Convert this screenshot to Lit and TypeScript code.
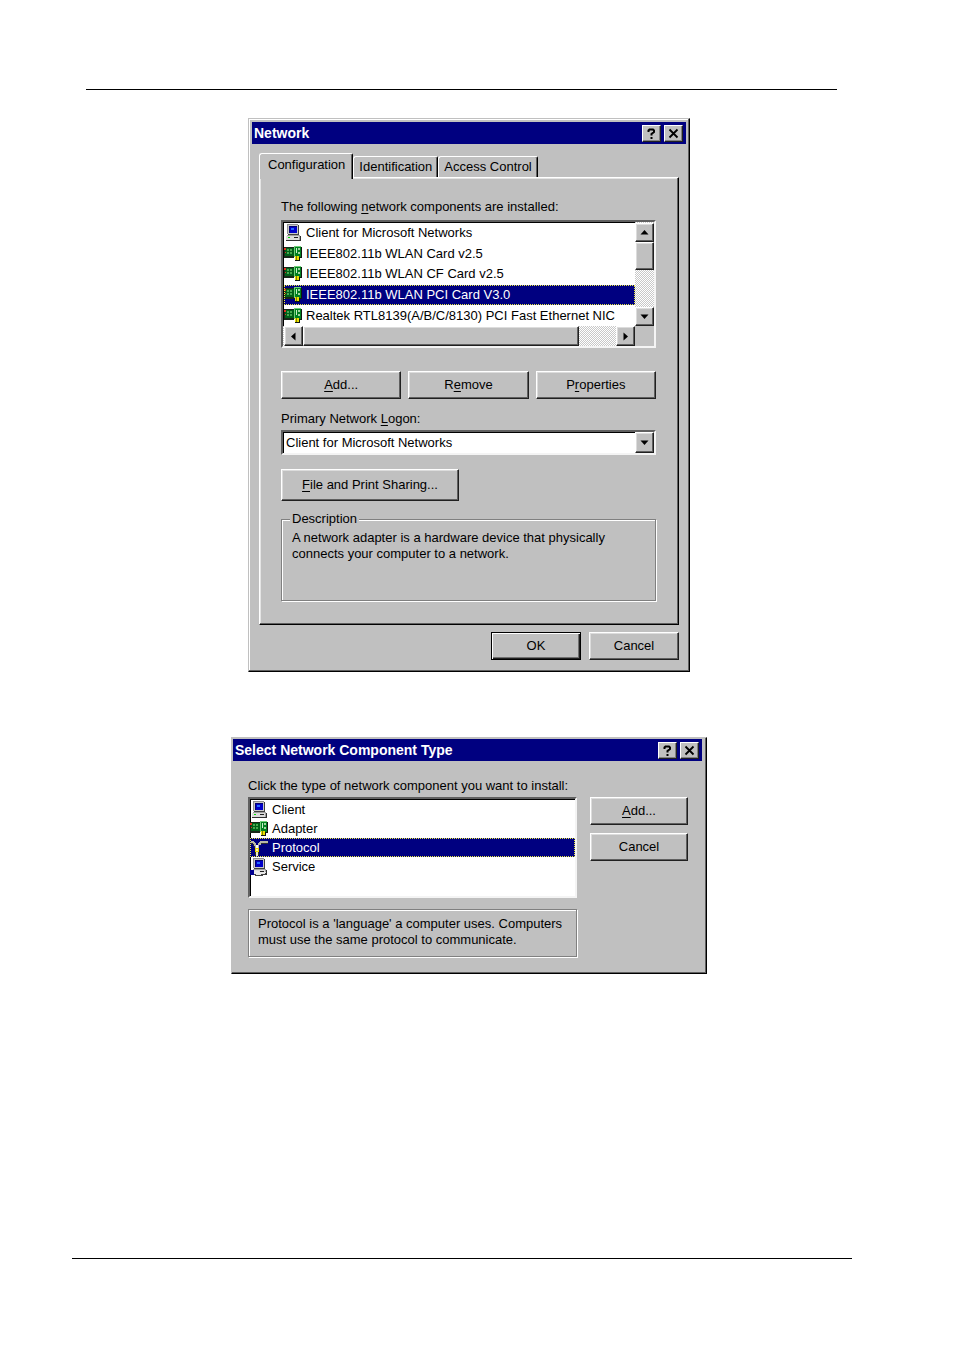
import { LitElement, html, css, svg, nothing } from "lit";
import { customElement, property, state } from "lit/decorators.js";

const computer = (hand: boolean) => svg`
  <path d="M3 0h11v1H4v9H3z" fill="#909090"/>
  <path d="M4 1h10v10H4z" fill="#c8c8c8"/>
  <path d="M14 1h1v10H4v-1h10z" fill="#404040"/>
  <path d="M5 2h8v7H5z" fill="#0000c8"/>
  <path d="M5 2h8v1H6v6H5z" fill="#000070"/>
  <path d="M7 4h3v2H7z" fill="#2468ff"/>
  <path d="M3 11h12l2 1v4H2v-4z" fill="#a0a0a0"/>
  <path d="M2 12h13v4H2z" fill="#dcdcdc"/>
  <path d="M16 12h1v5H2v-1h14z" fill="#303030"/>
  <path d="M4 13h2v1H4z" fill="#00e000"/>
  <path d="M10 13h4v1h-4z" fill="#202020"/>
  ${hand
    ? svg`<path d="M0 12h4v5H0z" fill="#000090"/>
      <path d="M4 13h4l2 1h6v2h-4l-1 1H6l-2-1z" fill="#e8e8e8"/>
      <path d="M4 16h2v1h5v-1h4v-1h1v2h-3v1H5v-1H4z" fill="#404040"/>`
    : nothing}`;

const card = svg`
  <path d="M0 2h10v11H0z" fill="#182818"/>
  <path d="M1 3h9v8H1z" fill="#006018"/>
  <path d="M0 3h2v2H0zM1 7h1v1H1z" fill="#e03020"/>
  <path d="M3 4h2v2H3zM6 4h2v2H6zM3 7h2v2H3zM6 7h2v2H6z" fill="#48a850"/>
  <path d="M10 1h7v11h-2v2h-4v-2h-1z" fill="#008020"/>
  <path d="M10 1h7v1h-6v10h-1z" fill="#70d078"/>
  <path d="M17 2h1v11h-2v3h-5v-1h4v-3h2z" fill="#101810"/>
  <path d="M12 3h1v5h-1z" fill="#c8f0c8"/>
  <path d="M14 3h2v2h-2zM14 7h2v2h-2z" fill="#a0d8a0"/>
  <path d="M11 11h4v4h-4z" fill="#e8e000"/>
  <path d="M12 11h1v4h-1z" fill="#808000"/>`;

const protocol = svg`
  <path d="M1 2h3v1h1v1h1v2h2V4h1V3h1V2h8v3h-7v1H9v3H5V7H4V5H3V4H1z" fill="#b8b8a8"/>
  <path d="M1 4h2v1h1v2h1v2H4V7H3V5H1zM11 4h7v1h-7z" fill="#303030"/>
  <path d="M6 6h2v3H6z" fill="#fff"/>
  <path d="M5 9h4v4H5z" fill="#e8d800"/>
  <path d="M6 10h2v2H6z" fill="#fff8b0"/>
  <path d="M5 13h4v3H5z" fill="#404010"/>
  <path d="M6 13h2v4H6z" fill="#e8e8d0"/>`;

const pictures: Record<string, unknown> = {
  client: computer(false),
  service: computer(true),
  adapter: card,
  protocol,
};

const base = css`
  * { box-sizing: border-box; }
  button, select, fieldset, legend, ul, li, p, h2 {
    margin: 0;
    padding: 0;
    font: inherit;
    color: inherit;
  }
  ul { list-style: none; }
  u { text-underline-offset: 2px; text-decoration-thickness: 1px; }
  .push {
    height: 28px;
    background: #c0c0c0;
    border: 1px solid;
    border-color: #fff #202020 #202020 #fff;
    box-shadow: inset -1px -1px #606060, inset 1px 1px #dcdcdc;
    border-radius: 0;
    text-align: center;
  }
  .sunken {
    background: #fff;
    border: 2px solid;
    border-color: #606060 #f4f4f4 #f4f4f4 #606060;
    box-shadow: inset 1px 1px #000;
  }
  .row { display: flex; align-items: center; gap: 4px; }
  .row svg { flex: none; width: 18px; height: 18px; }
  .row span { white-space: nowrap; }
  .selected {
    background: #000080;
    color: #fff;
    outline: 1px dotted #e8e840;
    outline-offset: -1px;
  }
`;

const picture = (name: string) => html`
  <svg viewBox="0 0 18 18" shape-rendering="crispEdges" aria-hidden="true">${pictures[name]}</svg>`;

@customElement("dialog-window")
class DialogWindow extends LitElement {
  @property() heading = "";
  @property({ type: Boolean, reflect: true }) slim = false;

  static styles = [base, css`
    :host {
      display: block;
      background: #c0c0c0;
      border: 1px solid;
      border-color: #c0c0c0 #000 #000 #c0c0c0;
      box-shadow: inset -1px -1px #606060, inset 1px 1px #fff;
      padding: 3px;
    }
    :host([slim]) {
      padding: 1px 4px 1px 1px;
      box-shadow: inset -1px -1px #606060;
    }
    .bar {
      display: flex;
      align-items: center;
      gap: 3px;
      height: 22px;
      padding: 0 3px 0 2px;
      background: #000080;
      color: #fff;
    }
    h2 { flex: 1; font-weight: bold; font-size: 14px; line-height: 16px; }
    .tool {
      display: grid;
      place-items: center;
      width: 19px;
      height: 17px;
      background: #c0c0c0;
      border: 1px solid;
      border-color: #fff #202020 #202020 #fff;
      box-shadow: inset -1px -1px #808080;
    }
    .tool svg { width: 11px; height: 11px; }
  `];

  render() {
    return html`
      <div class="bar">
        <h2>${this.heading}</h2>
        <button class="tool" aria-label="Help">
          <svg viewBox="0 0 11 11" fill="none" stroke="#000" stroke-width="2"><path d="M2.5 4V2.5L3.5 1.5H7L8 2.5V4L5.5 6V7.500M5.500 9V11"/></svg>
        </button>
        <button class="tool" aria-label="Close">
          <svg viewBox="0 0 11 11" stroke="#000" stroke-width="1.800"><path d="M1.500 1.500L9.500 9.500M9.500 1.500L1.500 9.500"/></svg>
        </button>
      </div>
      <slot></slot>`;
  }
}

@customElement("network-dialog")
class NetworkDialog extends LitElement {
  @state() private tab = 0;
  @state() private chosen = 3;

  private tabs = ["Configuration", "Identification", "Access Control"];
  private items = [
    ["client", "Client for Microsoft Networks"],
    ["adapter", "IEEE802.11b WLAN Card v2.5"],
    ["adapter", "IEEE802.11b WLAN CF Card v2.5"],
    ["adapter", "IEEE802.11b WLAN PCI Card V3.0"],
    ["adapter", "Realtek RTL8139(A/B/C/8130) PCI Fast Ethernet NIC"],
  ];

  static styles = [base, css`
    :host { display: block; }
    .body { padding: 9px 7px 8px; }
    .tabs { display: flex; align-items: flex-end; height: 24px; }
    .tab {
      height: 21px;
      padding: 0 5px;
      background: #c0c0c0;
      border: 1px solid;
      border-color: #fff #000 transparent #fff;
      border-bottom: 0;
      border-radius: 3px 2px 0 0;
      box-shadow: inset -1px 0 #606060;
      white-space: nowrap;
    }
    .tab.active {
      position: relative;
      height: 26px;
      margin-bottom: -2px;
      padding: 0 7px 3px 8px;
    }
    .panel {
      border: 1px solid;
      border-color: #fff #000 #000 #fff;
      box-shadow: inset -1px -1px #606060, inset 1px 1px #e4e4e4;
      padding: 21px 22px 23px 21px;
    }
    .caption { display: block; line-height: 16px; }
    .list {
      display: grid;
      grid-template-columns: 1fr 19px;
      grid-template-rows: 104px 20px;
      margin: 5px 0 23px;
    }
    .rows { display: flex; flex-direction: column; padding: 1px 0 0 1px; min-width: 0; }
    .rows .row { flex: 1; min-height: 0; }
    .vertical, .horizontal { display: flex; background: repeating-conic-gradient(#fff 0 25%, #c8c8c8 0 50%) 0 0 / 2px 2px; }
    .vertical { flex-direction: column; padding-top: 1px; }
    .horizontal { padding-left: 1px; }
    .corner { background: #c0c0c0; }
    .vertical .push, .horizontal .push, .arrow { display: grid; place-items: center; flex: none; }
    .vertical .push { height: 19px; }
    .horizontal .push { height: 20px; width: 19px; }
    .vertical .thumb { height: 28px; }
    .horizontal .thumb { width: 276px; flex: 0 1 276px; }
    .space { flex: 1; }
    .glyph { width: 9px; height: 9px; }
    .buttons { display: grid; grid-template-columns: repeat(3, 1fr); gap: 7px; margin-bottom: 12px; }
    .combo { display: flex; height: 25px; margin: 3px 0 14px; }
    select {
      flex: 1;
      min-width: 0;
      appearance: none;
      border: 0;
      border-radius: 0;
      background: transparent;
      padding-left: 3px;
    }
    .combo .arrow { width: 19px; height: 21px; pointer-events: none; }
    .sharing { display: block; width: 178px; height: 32px; margin-bottom: 10px; }
    fieldset {
      border: 1px solid #808080;
      box-shadow: 1px 1px #fff, inset 1px 1px #fff;
      padding: 3px 10px 38px;
      line-height: 16px;
    }
    legend { background: #c0c0c0; padding: 0 2px; margin-left: -2px; }
    .answers { display: flex; justify-content: flex-end; gap: 8px; margin-top: 7px; }
    .answers .push { width: 90px; }
    .answers .default {
      border-color: #000;
      box-shadow: inset 1px 1px #fff, inset -1px -1px #202020, inset -2px -2px #707070;
    }
  `];

  private glyph(d: string) {
    return html`<svg class="glyph" viewBox="0 0 9 9" aria-hidden="true"><path d=${d}/></svg>`;
  }

  render() {
    return html`
      <dialog-window heading="Network">
        <div class="body">
          <div class="tabs" role="tablist">
            ${this.tabs.map((t, i) => html`
              <button class="tab ${i === this.tab ? "active" : ""}" role="tab"
                aria-selected=${i === this.tab} @click=${() => (this.tab = i)}>${t}</button>`)}
          </div>
          <div class="panel" role="tabpanel">
            <span class="caption" id="installed">The following <u>n</u>etwork components are installed:</span>
            <div class="list sunken">
              <ul class="rows" role="listbox" aria-labelledby="installed">
                ${this.items.map(([icon, text], i) => html`
                  <li class="row ${i === this.chosen ? "selected" : ""}" role="option"
                    aria-selected=${i === this.chosen} @click=${() => (this.chosen = i)}>
                    ${picture(icon)}<span>${text}</span>
                  </li>`)}
              </ul>
              <div class="vertical">
                <button class="push" aria-label="Scroll up">${this.glyph("M4.500 2L8.500 6.500H.5z")}</button>
                <div class="push thumb"></div>
                <div class="space"></div>
                <button class="push" aria-label="Scroll down">${this.glyph("M.5 2.500H8.500L4.500 7z")}</button>
              </div>
              <div class="horizontal">
                <button class="push" aria-label="Scroll left">${this.glyph("M2 4.500L6.500 .5V8.500z")}</button>
                <div class="push thumb"></div>
                <div class="space"></div>
                <button class="push" aria-label="Scroll right">${this.glyph("M7 4.500L2.500 .5V8.500z")}</button>
              </div>
              <div class="corner"></div>
            </div>
            <div class="buttons">
              <button class="push"><u>A</u>dd...</button>
              <button class="push">R<u>e</u>move</button>
              <button class="push">P<u>r</u>operties</button>
            </div>
            <label class="caption" for="logon">Primary Network <u>L</u>ogon:</label>
            <div class="combo sunken">
              <select id="logon"><option>Client for Microsoft Networks</option></select>
              <span class="push arrow">${this.glyph("M.5 2.500H8.500L4.500 7z")}</span>
            </div>
            <button class="push sharing"><u>F</u>ile and Print Sharing...</button>
            <fieldset>
              <legend>Description</legend>
              <p>A network adapter is a hardware device that physically<br>connects your computer to a network.</p>
            </fieldset>
          </div>
          <div class="answers">
            <button class="push default">OK</button>
            <button class="push">Cancel</button>
          </div>
        </div>
      </dialog-window>`;
  }
}

@customElement("component-dialog")
class ComponentDialog extends LitElement {
  @state() private chosen = 2;

  private items = [
    ["client", "Client"],
    ["adapter", "Adapter"],
    ["protocol", "Protocol"],
    ["service", "Service"],
  ];

  static styles = [base, css`
    :host { display: block; }
    .body {
      display: grid;
      grid-template-columns: 1fr 98px;
      column-gap: 13px;
      padding: 17px 14px 15px 15px;
    }
    .caption { grid-column: 1 / -1; line-height: 16px; margin-bottom: 3px; }
    .list { height: 101px; padding: 1px 0 0; }
    .list .row { height: 19px; gap: 4px; }
    .side { display: flex; flex-direction: column; gap: 8px; }
    .note {
      margin-top: 11px;
      padding: 6px 9px 8px;
      border: 1px solid #808080;
      box-shadow: 1px 1px #fff, inset 1px 1px #fff;
      line-height: 16px;
    }
  `];

  render() {
    return html`
      <dialog-window slim heading="Select Network Component Type">
        <div class="body">
          <span class="caption" id="kind">Click the type of network component you want to install:</span>
          <ul class="list sunken" role="listbox" aria-labelledby="kind">
            ${this.items.map(([icon, text], i) => html`
              <li class="row ${i === this.chosen ? "selected" : ""}" role="option"
                aria-selected=${i === this.chosen} @click=${() => (this.chosen = i)}>
                ${picture(icon)}<span>${text}</span>
              </li>`)}
          </ul>
          <div class="side">
            <button class="push"><u>A</u>dd...</button>
            <button class="push">Cancel</button>
          </div>
          <p class="note">Protocol is a 'language' a computer uses. Computers<br>must use the same protocol to communicate.</p>
        </div>
      </dialog-window>`;
  }
}

@customElement("app-root")
class AppRoot extends LitElement {
  static styles = css`
    :host {
      display: block;
      background: #fff;
      color: #000;
      font: 13px/16px "Liberation Sans", Arial, sans-serif;
    }
    .page { padding: 89px 102px 92px 72px; }
    .content { display: flex; flex-direction: column; align-items: center; padding-left: 14px; }
    .rule { align-self: stretch; height: 1px; background: #000; }
    .top { margin: 0 15px 28px 0; }
    network-dialog { width: 442px; max-width: 100%; }
    component-dialog { width: 476px; max-width: 100%; margin: 65px 0 284px; }
  `;

  render() {
    return html`
      <main class="page">
        <div class="content">
          <div class="rule top"></div>
          <network-dialog></network-dialog>
          <component-dialog></component-dialog>
        </div>
        <div class="rule"></div>
      </main>`;
  }
}
